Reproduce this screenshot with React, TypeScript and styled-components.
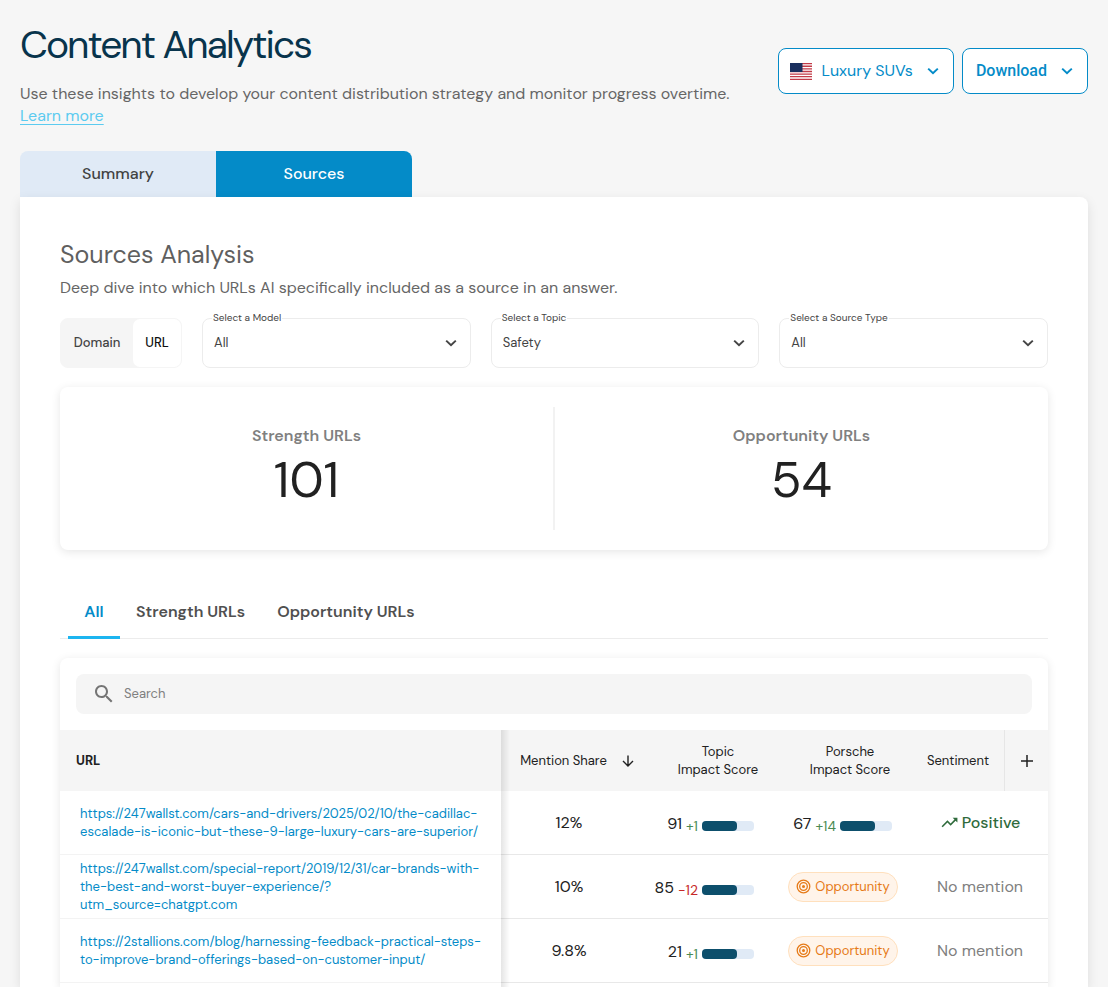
import React from "react";
import styled, { createGlobalStyle } from "styled-components";

const GlobalStyle = createGlobalStyle`
  *, *::before, *::after { box-sizing: border-box; }
  body {
    margin: 0;
    background: #f6f6f6;
    color: #212121;
    font-family: "DM Sans", Inter, "Liberation Sans", sans-serif;
    font-size: 16px;
    line-height: 22px;
  }
  button, input, select { font: inherit; color: inherit; }
  h1, h2, p { margin: 0; }
`;

const Page = styled.div`
  display: flex;
  flex-direction: column;
  min-height: 100vh;
  padding: 20px 20px 0;
`;

const Header = styled.header`
  display: flex;
  justify-content: space-between;
  gap: 20px;
  padding-bottom: 24px;
`;

const Title = styled.h1`
  margin-bottom: 14px;
  color: #08344c;
  font-size: 39px;
  font-weight: 400;
  line-height: 49px;
  letter-spacing: -2px;
`;

const Intro = styled.p`
  color: #666;
  font-size: 16px;
`;

const LearnMore = styled.a`
  display: block;
  width: fit-content;
  color: #5ccbf0;
  text-underline-offset: 3px;
`;

const Actions = styled.div`
  display: flex;
  flex: none;
  gap: 8px;
  padding-top: 28px;
`;

const ActionButton = styled.button<{ $strong?: boolean }>`
  display: flex;
  align-items: center;
  gap: 10px;
  height: 46px;
  padding: 0 14px 0 ${(p) => (p.$strong ? 13 : 11)}px;
  border: 1px solid #048bc8;
  border-radius: 8px;
  background: #fff;
  color: #048bc8;
  ${(p) => p.$strong && `font-family: Roboto, sans-serif; font-weight: 500;`}

  svg:last-child { margin-left: 4px; }
`;

const MainTabs = styled.div`
  display: flex;
`;

const MainTab = styled.button<{ $active?: boolean }>`
  width: 196px;
  height: 46px;
  border: 0;
  border-radius: ${(p) => (p.$active ? "0 8px 0 0" : "8px 0 0 0")};
  background: ${(p) => (p.$active ? "#048bc8" : "#e0eaf6")};
  color: ${(p) => (p.$active ? "#fff" : "#424242")};
  font-weight: 500;
`;

const Panel = styled.main`
  display: flex;
  flex: 1;
  flex-direction: column;
  padding: 40px 40px 0;
  border-radius: 0 8px 0 0;
  background: #fff;
  box-shadow: 0 4px 12px rgba(0, 0, 0, 0.1);
`;

const SectionTitle = styled.h2`
  color: #5f5f5f;
  font-size: 25px;
  font-weight: 400;
  line-height: 36px;
`;

const SectionText = styled.p`
  padding-top: 4px;
  color: #666;
`;

const Filters = styled.div`
  display: flex;
  gap: 20px;
  padding: 19px 0;
`;

const Toggle = styled.div`
  display: flex;
  width: 122px;
  height: 50px;
  border: 1px solid #f5f5f5;
  border-radius: 8px;
  background: #f5f5f5;
`;

const ToggleButton = styled.button<{ $active?: boolean }>`
  flex: ${(p) => (p.$active ? "0 0 48px" : 1)};
  padding: 0;
  border: 0;
  border-radius: 7px;
  background: ${(p) => (p.$active ? "#fff" : "transparent")};
  color: ${(p) => (p.$active ? "#111" : "#444")};
  font-size: 13px;
  font-weight: 500;
`;

const Field = styled.div`
  position: relative;
  flex: 1;
  color: #444;
`;

const FieldLabel = styled.label`
  position: absolute;
  top: -6px;
  left: 10px;
  padding: 0 1px;
  background: #fff;
  font-size: 10px;
  line-height: 12px;
`;

const FieldSelect = styled.select`
  width: 100%;
  height: 50px;
  padding: 0 40px 0 11px;
  appearance: none;
  border: 1px solid #ececec;
  border-radius: 8px;
  background: #fff;
  font-size: 13px;
`;

const FieldIcon = styled.span`
  position: absolute;
  top: 19px;
  right: 14px;
  display: flex;
  pointer-events: none;
`;

const card = `
  border-radius: 8px;
  background: #fff;
  box-shadow: 0 2px 10px rgba(0, 0, 0, 0.1);
`;

const Stats = styled.section`
  ${card}
  display: flex;
  padding: 20px 0;
`;

const Stat = styled.div`
  display: flex;
  flex: 1;
  flex-direction: column;
  align-items: center;
  gap: 2px;
  padding: 18px 0;

  & + & { border-left: 2px solid #f2f2f2; }
`;

const StatLabel = styled.span`
  color: #808080;
  font-weight: 600;
`;

const StatValue = styled.span`
  font-size: 50px;
  line-height: 63px;
`;

const SubTabs = styled.div`
  display: flex;
  margin: 34px 0 19px;
  padding: 0 8px;
  border-bottom: 1px solid #ececec;
`;

const SubTab = styled.button<{ $active?: boolean }>`
  min-width: 52px;
  height: 55px;
  margin-bottom: -1px;
  padding: 3px 16px 0;
  border: 0;
  border-bottom: 3px solid ${(p) => (p.$active ? "#1cb5f0" : "transparent")};
  background: none;
  color: ${(p) => (p.$active ? "#048bc8" : "#505050")};
  font-weight: 600;
`;

const TableCard = styled.section`
  ${card}
  flex: 1;
  display: flex;
  flex-direction: column;
  border-radius: 8px 8px 0 0;
`;

const SearchBox = styled.label`
  display: flex;
  align-items: center;
  gap: 8px;
  height: 40px;
  margin: 16px;
  padding: 0 16px;
  border-radius: 8px;
  background: #f5f5f5;
  color: #757575;
`;

const SearchInput = styled.input`
  flex: 1;
  padding: 0;
  border: 0;
  outline: 0;
  background: none;
  font-size: 13px;

  &::placeholder { color: #808080; opacity: 1; }
`;

const TableArea = styled.div`
  position: relative;
  flex: 1;

  &::after {
    content: "";
    position: absolute;
    top: 0;
    right: 538px;
    bottom: 0;
    width: 9px;
    background: linear-gradient(to right, rgba(0, 0, 0, 0.1), transparent);
  }
`;

const Table = styled.table`
  width: 100%;
  table-layout: fixed;
  border-spacing: 0;
`;

const Col = styled.col<{ $width?: number }>`
  ${(p) => p.$width && `width: ${p.$width}px;`}
`;

const HeadCell = styled.th<{ $align?: string; $indent?: number; $bold?: boolean; $divided?: boolean }>`
  height: 61px;
  padding: 0 0 0 ${(p) => p.$indent ?? 0}px;
  ${(p) => p.$divided && `border-left: 1px solid #e6e6e6;`}
  background: #f5f5f5;
  font-size: 13px;
  font-weight: ${(p) => (p.$bold ? 700 : 400)};
  line-height: 18px;
  text-align: ${(p) => p.$align ?? "center"};
`;

const SortButton = styled.button`
  display: inline-flex;
  align-items: center;
  gap: 14px;
  padding: 0;
  border: 0;
  background: none;
`;

const AddButton = styled.button`
  display: inline-flex;
  padding: 0;
  border: 0;
  background: none;
  vertical-align: middle;
`;

const Cell = styled.td<{ $align?: string }>`
  height: 64px;
  padding: 0 ${(p) => (p.$align === "right" ? 20 : 0)}px 0 0;
  border-bottom: 1px solid #e8e8e8;
  text-align: ${(p) => p.$align ?? "center"};
`;

const UrlCell = styled(Cell)`
  padding: 0 0 0 20px;
  border-color: #f3f3f3;
  font-size: 13px;
  line-height: 18px;
  text-align: left;
`;

const UrlLink = styled.a`
  color: #048bc8;
  text-decoration: none;
  white-space: pre-line;
`;

const Score = styled.span`
  display: inline-flex;
  align-items: center;
  gap: 4px;
  padding-top: 2px;
`;

const Delta = styled.span<{ $down: boolean }>`
  padding-top: 4px;
  color: ${(p) => (p.$down ? "#c62828" : "#4a8a52")};
  font-size: 14px;
  line-height: 18px;
`;

const Track = styled.span`
  width: 52px;
  height: 10px;
  margin-top: 4px;
  border-radius: 4px;
  background: #e0eaf6;
`;

const Fill = styled.span`
  display: block;
  height: 10px;
  border-radius: 4px;
  background: #0d4f6c;
`;

const Chip = styled.span`
  display: inline-flex;
  align-items: center;
  gap: 4px;
  height: 30px;
  padding: 0 7px;
  border: 1px solid #ffe0bd;
  border-radius: 15px;
  background: #fff4ea;
  color: #e67a17;
  font-size: 13px;
  vertical-align: middle;
`;

const Sentiment = styled.span<{ $positive: boolean }>`
  display: inline-flex;
  align-items: center;
  gap: 3px;
  color: ${(p) => (p.$positive ? "#2f6b3c" : "#808080")};
  font-weight: ${(p) => (p.$positive ? 500 : 400)};
  vertical-align: middle;
`;

const Chevron = () => (
  <svg width="12" height="12" viewBox="0 0 12 12" fill="none" stroke="currentColor" strokeWidth="2" aria-hidden="true">
    <path d="M1.2 3.6 6 8.2l4.8-4.6" />
  </svg>
);

const Flag = () => (
  <svg width="22" height="17" viewBox="0 0 22 17" aria-hidden="true">
    <path fill="#fff" d="M0 0h22v17H0z" />
    <path
      stroke="#c23b48"
      strokeWidth="1.3"
      d="M0 .65h22M0 3.27h22M0 5.88h22M0 8.5h22M0 11.1h22M0 13.7h22M0 16.35h22"
    />
    <path fill="#1a2f5e" d="M0 0h12.5v9H0z" />
  </svg>
);

const SearchIcon = () => (
  <svg width="24" height="24" viewBox="0 0 24 24" fill="currentColor" aria-hidden="true">
    <path d="M15.5 14h-.79l-.28-.27C15.41 12.59 16 11.11 16 9.5 16 5.91 13.09 3 9.5 3S3 5.91 3 9.5 5.91 16 9.5 16c1.61 0 3.09-.59 4.23-1.57l.27.28v.79l5 4.99L20.49 19l-4.99-5zm-6 0C7.01 14 5 11.99 5 9.5S7.01 5 9.5 5 14 7.01 14 9.5 11.99 14 9.5 14z" />
  </svg>
);

const ArrowDown = () => (
  <svg width="14" height="14" viewBox="0 0 14 14" fill="none" stroke="currentColor" strokeWidth="1.4" aria-hidden="true">
    <path d="M7 1.5v10.3M2 7l5 5 5-5" />
  </svg>
);

const Plus = () => (
  <svg width="14" height="14" viewBox="0 0 14 14" stroke="currentColor" strokeWidth="1.5" aria-hidden="true">
    <path d="M7 1v12M1 7h12" />
  </svg>
);

const Target = () => (
  <svg width="15" height="15" viewBox="0 0 15 15" fill="none" stroke="currentColor" strokeWidth="1.3" aria-hidden="true">
    <circle cx="7.5" cy="7.5" r="6.3" />
    <circle cx="7.5" cy="7.5" r="3.8" />
    <circle cx="7.5" cy="7.5" r="1.5" fill="currentColor" stroke="none" />
  </svg>
);

const TrendUp = () => (
  <svg width="19" height="19" viewBox="0 0 24 24" fill="currentColor" aria-hidden="true">
    <path d="m16 6 2.29 2.29-4.88 4.88-4-4L2 16.59 3.41 18l6-6 4 4 6.3-6.29L22 12V6z" />
  </svg>
);

type ScoreData = { value: number; delta: string; fill: number };

const ScoreView = ({ value, delta, fill }: ScoreData) => (
  <Score>
    {value}
    <Delta $down={delta.startsWith("-")}>{delta}</Delta>
    <Track>
      <Fill style={{ width: `${fill}%` }} />
    </Track>
  </Score>
);

const filters = [
  { id: "model", label: "Select a Model", value: "All" },
  { id: "topic", label: "Select a Topic", value: "Safety" },
  { id: "source-type", label: "Select a Source Type", value: "All" },
];

const rows: { url: string; share: string; topic: ScoreData; brand?: ScoreData }[] = [
  {
    url: "https://247wallst.com/cars-and-drivers/2025/02/10/the-cadillac-\nescalade-is-iconic-but-these-9-large-luxury-cars-are-superior/",
    share: "12%",
    topic: { value: 91, delta: "+1", fill: 68 },
    brand: { value: 67, delta: "+14", fill: 68 },
  },
  {
    url: "https://247wallst.com/special-report/2019/12/31/car-brands-with-\nthe-best-and-worst-buyer-experience/?\nutm_source=chatgpt.com",
    share: "10%",
    topic: { value: 85, delta: "-12", fill: 68 },
  },
  {
    url: "https://2stallions.com/blog/harnessing-feedback-practical-steps-\nto-improve-brand-offerings-based-on-customer-input/",
    share: "9.8%",
    topic: { value: 21, delta: "+1", fill: 68 },
  },
];

export default function App() {
  return (
    <>
      <GlobalStyle />
      <Page>
        <Header>
          <div>
            <Title>Content Analytics</Title>
            <Intro>
              Use these insights to develop your content distribution strategy and monitor progress overtime.
              <LearnMore href="#learn-more">Learn more</LearnMore>
            </Intro>
          </div>
          <Actions>
            <ActionButton>
              <Flag />
              Luxury SUVs
              <Chevron />
            </ActionButton>
            <ActionButton $strong>
              Download
              <Chevron />
            </ActionButton>
          </Actions>
        </Header>

        <MainTabs>
          <MainTab>Summary</MainTab>
          <MainTab $active>Sources</MainTab>
        </MainTabs>

        <Panel>
          <SectionTitle>Sources Analysis</SectionTitle>
          <SectionText>Deep dive into which URLs AI specifically included as a source in an answer.</SectionText>

          <Filters>
            <Toggle>
              <ToggleButton aria-pressed={false}>Domain</ToggleButton>
              <ToggleButton $active aria-pressed>URL</ToggleButton>
            </Toggle>
            {filters.map((f) => (
              <Field key={f.id}>
                <FieldSelect id={f.id} defaultValue={f.value}>
                  <option>{f.value}</option>
                </FieldSelect>
                <FieldLabel htmlFor={f.id}>{f.label}</FieldLabel>
                <FieldIcon>
                  <Chevron />
                </FieldIcon>
              </Field>
            ))}
          </Filters>

          <Stats>
            <Stat>
              <StatLabel>Strength URLs</StatLabel>
              <StatValue>101</StatValue>
            </Stat>
            <Stat>
              <StatLabel>Opportunity URLs</StatLabel>
              <StatValue>54</StatValue>
            </Stat>
          </Stats>

          <SubTabs>
            <SubTab $active>All</SubTab>
            <SubTab>Strength URLs</SubTab>
            <SubTab>Opportunity URLs</SubTab>
          </SubTabs>

          <TableCard>
            <SearchBox>
              <SearchIcon />
              <SearchInput type="search" placeholder="Search" aria-label="Search" />
            </SearchBox>
            <TableArea>
              <Table>
                <colgroup>
                  <Col />
                  <Col $width={136} />
                  <Col $width={137} />
                  <Col $width={138} />
                  <Col $width={92} />
                  <Col $width={44} />
                </colgroup>
                <thead>
                  <tr>
                    <HeadCell $align="left" $indent={16} $bold>URL</HeadCell>
                    <HeadCell $indent={17}>
                      <SortButton>
                        Mention Share
                        <ArrowDown />
                      </SortButton>
                    </HeadCell>
                    <HeadCell $indent={25}>Topic<br />Impact Score</HeadCell>
                    <HeadCell $indent={14}>Porsche<br />Impact Score</HeadCell>
                    <HeadCell>Sentiment</HeadCell>
                    <HeadCell $divided>
                      <AddButton aria-label="Add column">
                        <Plus />
                      </AddButton>
                    </HeadCell>
                  </tr>
                </thead>
                <tbody>
                  {rows.map((r) => (
                    <tr key={r.url}>
                      <UrlCell>
                        <UrlLink href={r.url.replace(/\n/g, "")}>{r.url}</UrlLink>
                      </UrlCell>
                      <Cell>{r.share}</Cell>
                      <Cell $align="right">
                        <ScoreView {...r.topic} />
                      </Cell>
                      <Cell $align={r.brand ? "right" : "center"}>
                        {r.brand ? (
                          <ScoreView {...r.brand} />
                        ) : (
                          <Chip>
                            <Target />
                            Opportunity
                          </Chip>
                        )}
                      </Cell>
                      <Cell colSpan={2}>
                        <Sentiment $positive={!!r.brand}>
                          {r.brand && <TrendUp />}
                          {r.brand ? "Positive" : "No mention"}
                        </Sentiment>
                      </Cell>
                    </tr>
                  ))}
                </tbody>
              </Table>
            </TableArea>
          </TableCard>
        </Panel>
      </Page>
    </>
  );
}
